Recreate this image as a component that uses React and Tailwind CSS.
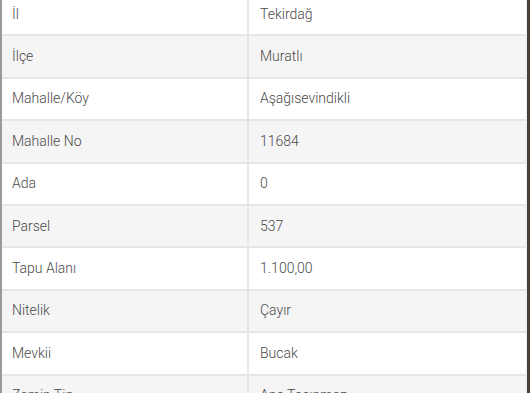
const rows = [
  ['İl', 'Tekirdağ'],
  ['İlçe', 'Muratlı'],
  ['Mahalle/Köy', 'Aşağısevindikli'],
  ['Mahalle No', '11684'],
  ['Ada', '0'],
  ['Parsel', '537'],
  ['Tapu Alanı', '1.100,00'],
  ['Nitelik', 'Çayır'],
  ['Mevkii', 'Bucak'],
  ['Zemin Tip', 'Ana Taşınmaz'],
];

export default function App() {
  return (
    <div className="h-[393px] w-[530px] overflow-hidden bg-white font-['Roboto',sans-serif]">
      <div className="flex h-full border-l-2 border-r-[3px] border-l-[#9a9a9a] border-r-[#4a4038]">
        <div className="-mt-[6px] flex-1 border-r border-[#ececec]">
          {rows.map(([label, value], i) => (
            <div
              key={label}
              className={`flex h-[42.4px] border-b-2 border-[#e6e6e6] text-[14px] font-light text-[#4a4a4a] ${i % 2 ? 'bg-[#f5f5f5]' : 'bg-white'}`}
            >
              <div className="flex w-[247px] items-center border-r-2 border-[#e6e6e6] pl-[10px]">{label}</div>
              <div className="flex flex-1 items-center pl-[11px]">{value}</div>
            </div>
          ))}
        </div>
      </div>
    </div>
  );
}
